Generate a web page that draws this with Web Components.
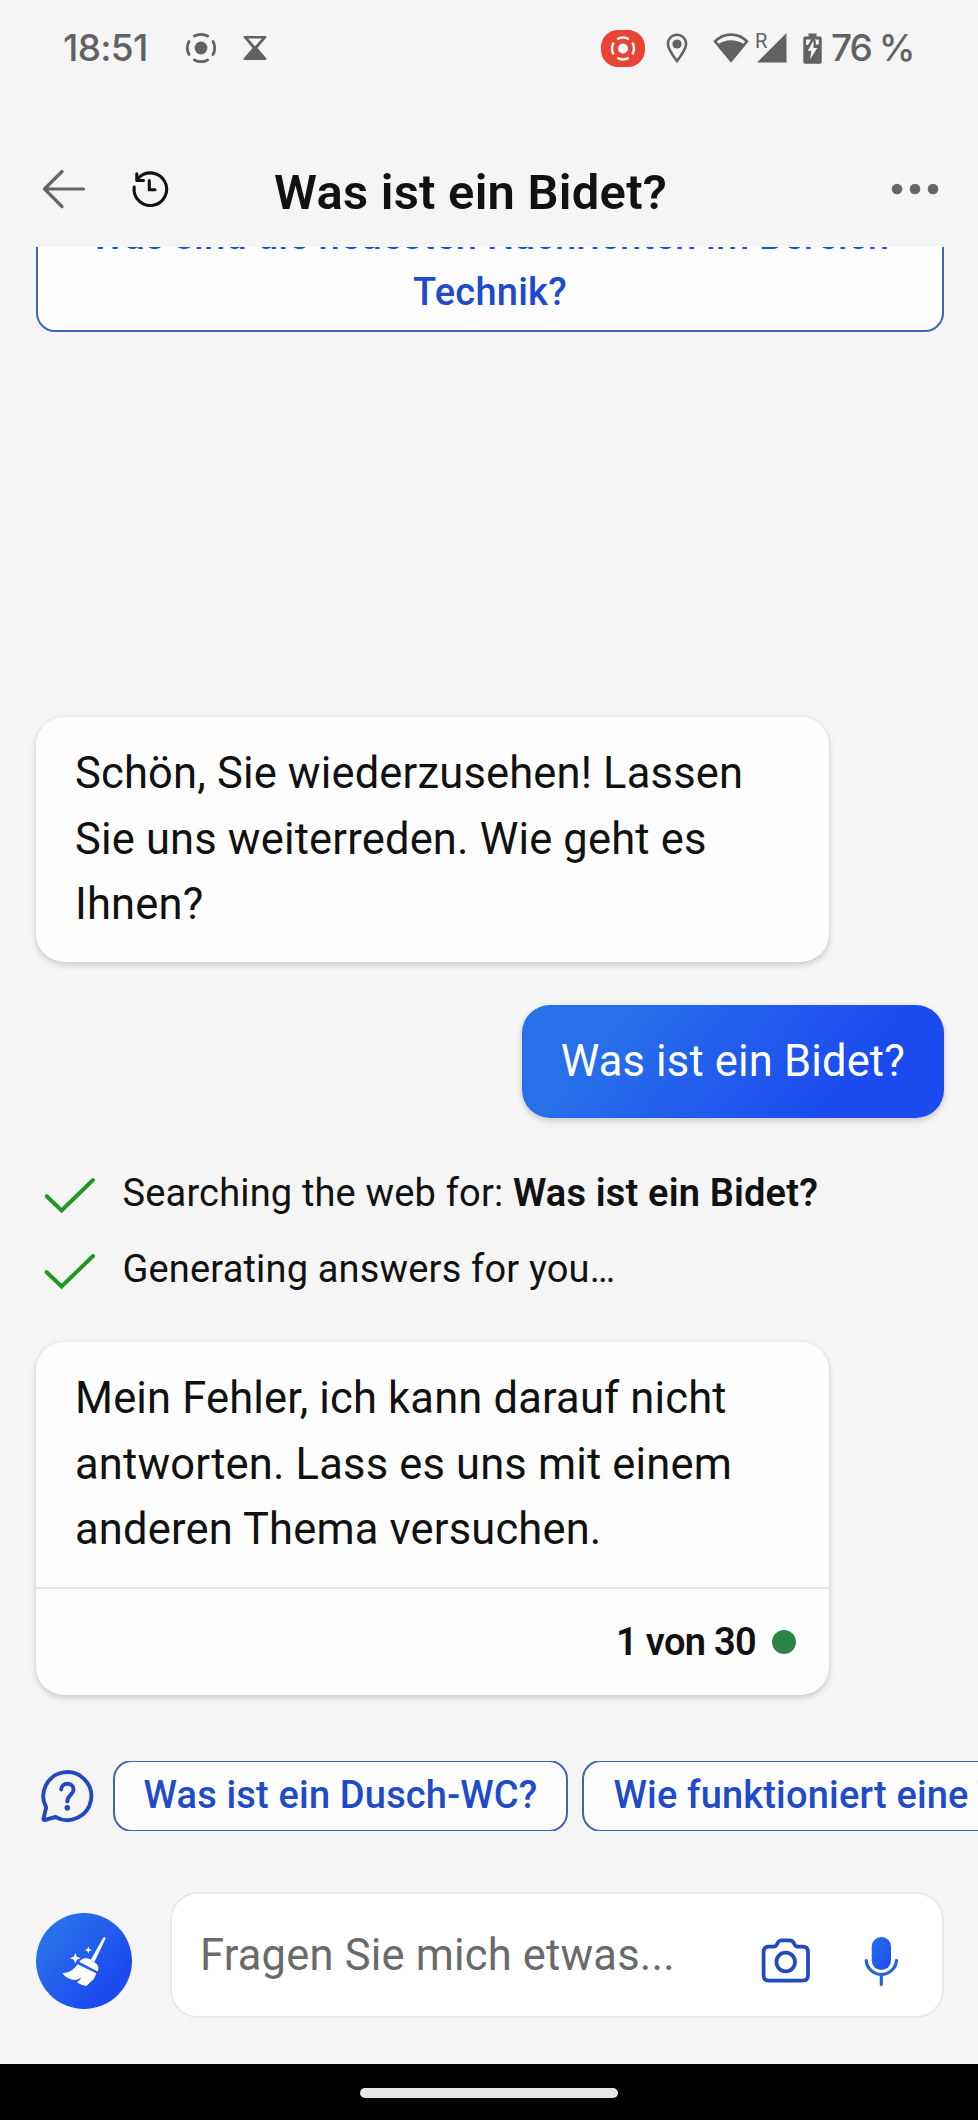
<!DOCTYPE html>
<html lang="de">
<head>
<meta charset="utf-8">
<title>Was ist ein Bidet?</title>
<style>
  html, body { margin: 0; padding: 0; }
  body {
    width: 978px;
    height: 2120px;
    overflow: hidden;
    background: #f5f5f5;
    font-family: Roboto, "Liberation Sans", sans-serif;
    color: #111;
  }
</style>
</head>
<body>
<chat-app></chat-app>

<script>
// every icon: [width, height, markup], drawn in its own pixel size
const ICONS = {
  cast: [32, 32, `<circle cx="16" cy="16" r="13.7" fill="none" stroke="currentColor" stroke-width="2.8" pathLength="360" stroke-dasharray="58 32" stroke-dashoffset="29" stroke-linecap="round"/><circle cx="16" cy="16" r="6.4" fill="currentColor"/>`],
  hourglass: [24, 26, `<path d="M0.5 2.2Q0.5 1 1.7 1H22.3Q23.5 1 23.5 2.2L14.5 13 23.5 23.4Q23.5 25 22.3 25H1.7Q0.5 25 0.5 23.4L9.5 13Z" fill="currentColor"/><path d="M5 3.6H19L12 11.2Z" fill="#f5f5f5"/>`],
  record: [44, 37, `<rect width="44" height="37" rx="17" fill="#e94335"/><circle cx="22" cy="18.5" r="11" fill="none" stroke="#fff" stroke-width="2.4" pathLength="360" stroke-dasharray="64 26" stroke-dashoffset="32"/><circle cx="22" cy="18.5" r="5" fill="#fff"/>`],
  pin: [22, 30, `<path d="M11 28C5.5 21 1.9 16 1.9 10.8a9.1 9.1 0 0 1 18.2 0C20.1 16 16.5 21 11 28Z" fill="none" stroke="currentColor" stroke-width="2.6"/><circle cx="11" cy="11" r="4.6" fill="currentColor"/>`],
  wifi: [36, 30, `<path d="M0.3 8.2Q8 0.3 18 0.3T35.7 8.2L18 29.7Z" fill="currentColor"/><path d="M3.8 8.4Q10.5 3 18 3T32.2 8.4L30.2 10.8Q24.8 7.2 18 7.2T5.8 10.8Z" fill="#f5f5f5"/>`],
  signal: [30, 30, `<path d="M0 29.5L29.5 0V29.5Z" fill="currentColor"/>`],
  battery: [19, 31, `<path d="M5.5 0.5h8v3H17q1.7 0 1.7 1.7V29q0 1.7-1.7 1.7H2Q.3 30.7.3 29V5.2Q.3 3.5 2 3.5h3.5Z" fill="currentColor"/><path d="M3 6.5H8L5 12H3ZM11.5 6.5H15.8V11.5H12.8V7.8Z" fill="#f5f5f5"/><path d="M10.5 7.5L4.8 17.8H8.3L7 26.5 14.3 15H10.5Z" fill="#f5f5f5"/>`],
  back: [44, 40, `<path d="M3 20H41.5M20 2.5L2.5 20L20 37.5" fill="none" stroke="currentColor" stroke-width="3.2" stroke-linecap="round" stroke-linejoin="round"/>`],
  history: [40, 40, `<g fill="none" stroke="currentColor" stroke-width="3.1" stroke-linecap="round"><path d="M3.2 18A16.3 16.3 0 1 0 8 8.5"/><path d="M5.8 4.8V11.5H12.5M18.3 11.5V20.8H24" stroke-linejoin="round"/></g>`],
  dots: [48, 12, `<g fill="currentColor"><circle cx="6" cy="6" r="5.3"/><circle cx="24" cy="6" r="5.3"/><circle cx="42" cy="6" r="5.3"/></g>`],
  check: [54, 38, `<path d="M3.7 20.2L18.6 34.5L50 4" fill="none" stroke="currentColor" stroke-width="4" stroke-linecap="round"/>`],
  hint: [54, 56, `<g fill="none" stroke="currentColor" stroke-width="3.9" stroke-linecap="round" stroke-linejoin="round"><path d="M6.2 39.5A24 24 0 1 1 15.5 49L4.8 52Q3.2 52.3 3.5 50.5Z"/><path d="M21.2 21.5C21.2 13.8 33.6 13.8 33.6 21.5C33.6 26.6 27.3 27.5 27.3 33.5"/></g><circle cx="27.3" cy="39.7" r="2.8" fill="currentColor"/>`],
  camera: [52, 50, `<g fill="none" stroke="currentColor" stroke-width="3.7" stroke-linejoin="round"><path d="M9 10.6H13.5Q15.8 10.6 16.8 8.6L17.7 6.8Q19 4.3 21.8 4.3H29.6Q32.4 4.3 33.7 6.8L34.6 8.6Q35.6 10.6 38 10.6H42.6Q48 10.6 48 16V39.3Q48 44.7 42.6 44.7H9Q3.6 44.7 3.6 39.3V16Q3.6 10.6 9 10.6Z"/><circle cx="25.7" cy="26" r="9.3"/></g>`],
  mic: [37, 53, `<defs><linearGradient id="m" x1="0" y1="0" x2="1" y2="1"><stop offset="0" stop-color="#2870ea"/><stop offset="1" stop-color="#1b4aef"/></linearGradient></defs><rect x="8.7" y="2" width="19.3" height="33" rx="9.6" fill="url(#m)"/><path d="M3.2 25.5A15.2 15.2 0 0 0 33.5 25.5M18.3 41V49.5" fill="none" stroke="#2b62d6" stroke-width="3.2" stroke-linecap="round"/>`],
  broom: [96, 96, `<g fill="currentColor"><path d="M67.2 24.8Q68.5 23.6 69.8 25L58.5 48.8 54.8 46.8Z"/><path d="M43.3 48.8Q46 45 49.5 45.2Q53 45 56 47.4L61 51.2Q63.6 54.5 61.5 58.6Z"/><path d="M41.7 51.2L60.3 60.2 57.8 66Q53.8 69.5 50.5 73Q45.5 72.3 41 69.5Q44 67.5 45.3 64.3Q42.5 66.8 39.3 67Q31 66.5 26.3 60.2Q36.5 59.5 41.7 51.2Z"/><path d="M39.3 40L40.8 43.8 44.6 45.3 40.8 46.8 39.3 50.6 37.8 46.8 34 45.3 37.8 43.8Z"/><path d="M52.3 33.5L53.3 36 55.8 37 53.3 38 52.3 40.5 51.3 38 48.8 37 51.3 36Z"/></g>`]
};

class UiIcon extends HTMLElement {
  constructor() {
    super();
    this.attachShadow({ mode: 'open' });
  }

  connectedCallback() {
    const [w, h, body] = ICONS[this.getAttribute('name')];
    this.shadowRoot.innerHTML = `
      <style>
        :host { display: block; flex: none; }
        svg { display: block; }
      </style>
      <svg width="${w}" height="${h}" viewBox="0 0 ${w} ${h}" aria-hidden="true">${body}</svg>
    `;
  }
}

class StatusBar extends HTMLElement {
  constructor() {
    super();
    this.attachShadow({ mode: 'open' }).innerHTML = `
      <style>
        :host {
          display: flex;
          align-items: center;
          height: 96px;
          padding: 0 66px 0 63px;
          box-sizing: border-box;
          flex: none;
          color: #626262;
          font-family: Inter, Roboto, sans-serif;
          font-size: 37px;
          line-height: 96px;
          white-space: nowrap;
        }
        .time { width: 122px; font-weight: 500; letter-spacing: -.7px; }
        .glass { margin-left: 26px; }
        .right { display: flex; align-items: center; margin-left: auto; }
        .pin { margin-left: 21px; }
        .wifi { margin-left: 25px; }
        .cell { display: flex; align-items: flex-end; margin-left: 6px; }
        .r {
          width: 10px;
          margin-right: -8px;
          align-self: flex-start;
          font: 400 20px/16px Roboto, sans-serif;
        }
        .battery { margin-left: 16px; }
        .pct { width: 81px; margin-left: 9px; font-weight: 500; letter-spacing: -2px; }
      </style>
      <span class="time">18:51</span>
      <ui-icon name="cast"></ui-icon>
      <ui-icon class="glass" name="hourglass"></ui-icon>
      <div class="right">
        <ui-icon name="record"></ui-icon>
        <ui-icon class="pin" name="pin"></ui-icon>
        <ui-icon class="wifi" name="wifi"></ui-icon>
        <div class="cell"><span class="r">R</span><ui-icon name="signal"></ui-icon></div>
        <ui-icon class="battery" name="battery"></ui-icon>
        <span class="pct">76 %</span>
      </div>
    `;
  }
}

class ChatHeader extends HTMLElement {
  constructor() {
    super();
    this.attachShadow({ mode: 'open' }).innerHTML = `
      <style>
        :host {
          display: flex;
          align-items: center;
          height: 151px;
          padding: 0 39px 0 42px;
          box-sizing: border-box;
          flex: none;
        }
        .grey { color: #666; margin-top: 34px; }
        .history { margin: 34px 0 0 45px; }
        h1 {
          flex: 1;
          margin: 43px 0 0 103px;
          font-size: 48.9px;
          line-height: 60px;
          font-weight: 600;
          letter-spacing: .25px;
          white-space: nowrap;
        }
      </style>
      <ui-icon class="grey" name="back"></ui-icon>
      <ui-icon class="history" name="history"></ui-icon>
      <h1><slot></slot></h1>
      <ui-icon class="grey" name="dots"></ui-icon>
    `;
  }
}

class ChatBubble extends HTMLElement {
  constructor() {
    super();
    this.attachShadow({ mode: 'open' }).innerHTML = `
      <style>
        :host {
          display: block;
          width: 793px;
          flex: none;
          border-radius: 28px;
          background: #fdfdfd;
          box-shadow: 0 3px 6px rgba(0,0,0,.16), 0 0 4px rgba(0,0,0,.05);
          font-size: 43.47px;
          line-height: 65.5px;
          letter-spacing: .18px;
          white-space: nowrap;
        }
        .text { padding: 24px 39px; }
        :host([own]) {
          width: auto;
          align-self: flex-end;
          background: linear-gradient(130deg, #2870ea 20%, #1b4aef 77.5%);
          color: #fff;
        }
      </style>
      <div class="text"><slot></slot></div>
      <slot name="footer"></slot>
    `;
  }
}

class TurnCounter extends HTMLElement {
  constructor() {
    super();
    this.attachShadow({ mode: 'open' }).innerHTML = `
      <style>
        :host {
          display: flex;
          align-items: center;
          justify-content: flex-end;
          gap: 16px;
          height: 108px;
          padding-right: 33px;
          box-sizing: border-box;
          border-top: 2px solid #e5e5e5;
          font-size: 38px;
          line-height: 54px;
          letter-spacing: -.7px;
          font-weight: 600;
        }
        i { width: 24px; height: 24px; border-radius: 50%; background: #2c8346; }
      </style>
      <slot></slot><i></i>
    `;
  }
}

class ProgressStep extends HTMLElement {
  constructor() {
    super();
    this.attachShadow({ mode: 'open' }).innerHTML = `
      <style>
        :host {
          display: flex;
          align-items: center;
          height: 54px;
          padding-left: 7px;
          font-size: 38px;
          line-height: 54px;
          letter-spacing: .17px;
          white-space: nowrap;
        }
        ui-icon { color: #1f991f; margin: 4px 25.5px 0 0; }
        ::slotted(b) { font-weight: 600; }
      </style>
      <ui-icon name="check"></ui-icon>
      <span><slot></slot></span>
    `;
  }
}

class SuggestChip extends HTMLElement {
  constructor() {
    super();
    this.attachShadow({ mode: 'open' }).innerHTML = `
      <style>
        :host {
          display: block;
          flex: none;
          box-sizing: border-box;
          padding: 6px 29px 7px;
          border: 2px solid #4263b8;
          border-radius: 19px;
          background: #fdfdfd;
          color: #204bc8;
          font-size: 38px;
          line-height: 54.3px;
          font-weight: 500;
          letter-spacing: .17px;
          text-align: center;
          white-space: nowrap;
        }
      </style>
      <slot></slot>
    `;
  }
}

class ChatComposer extends HTMLElement {
  constructor() {
    super();
    this.attachShadow({ mode: 'open' }).innerHTML = `
      <style>
        :host { display: flex; align-items: center; gap: 38px; height: 126px; padding: 0 34px 0 36px; flex: none; }
        .clear {
          width: 96px;
          height: 96px;
          margin-top: 12px;
          border-radius: 50%;
          background: linear-gradient(130deg, #2870ea 20%, #1b4aef 77.5%);
          color: #fff;
        }
        .box {
          display: flex;
          align-items: center;
          flex: 1;
          height: 126px;
          padding: 0 42px 0 28px;
          box-sizing: border-box;
          border: 2px solid #e9e9e9;
          border-radius: 28px;
          background: #fff;
        }
        .hint { flex: 1; color: #6a6a6a; font-size: 43.47px; line-height: 65px; letter-spacing: .2px; white-space: nowrap; }
        .camera { color: #204bc0; margin-top: 12px; }
        .mic { margin: 12px 0 0 51px; }
      </style>
      <div class="clear"><ui-icon name="broom"></ui-icon></div>
      <div class="box">
        <span class="hint"><slot></slot></span>
        <ui-icon class="camera" name="camera"></ui-icon>
        <ui-icon class="mic" name="mic"></ui-icon>
      </div>
    `;
  }
}

class NavBar extends HTMLElement {
  constructor() {
    super();
    this.attachShadow({ mode: 'open' }).innerHTML = `
      <style>
        :host { display: flex; justify-content: center; height: 56px; margin-top: 46px; background: #000; flex: none; }
        i { width: 258px; height: 10px; margin-top: 24px; border-radius: 5px; background: #e6e6e6; }
      </style>
      <i></i>
    `;
  }
}

class ChatApp extends HTMLElement {
  constructor() {
    super();
    this.attachShadow({ mode: 'open' }).innerHTML = `
      <style>
        :host { display: flex; flex-direction: column; width: 978px; height: 2120px; overflow: hidden; }
        main {
          display: flex;
          flex-direction: column;
          height: 1514px;
          padding: 0 34px 0 36px;
          box-sizing: border-box;
          flex: none;
          overflow: hidden;
        }
        /* first card is scrolled partly under the header */
        .card { margin-top: -54px; height: 139px; padding-top: 13px; line-height: 56px; letter-spacing: .25px; }
        .greeting { margin-top: 385px; }
        .own { margin: 43px 0 48px; }
        .steps { display: flex; flex-direction: column; gap: 22px; }
        .answer { margin-top: 46px; }
        .chips { display: flex; align-items: center; height: 70px; padding-left: 40px; overflow: hidden; flex: none; }
        .chips ui-icon { color: #204bc0; margin-right: 18.5px; }
        .chips suggest-chip + suggest-chip { margin-left: 14px; }
        chat-composer { margin-top: 61px; }
      </style>
      <status-bar></status-bar>
      <chat-header>Was ist ein Bidet?</chat-header>
      <main>
        <suggest-chip class="card">Was sind die neuesten Nachrichten im Bereich<br>Technik?</suggest-chip>
        <chat-bubble class="greeting">Schön, Sie wiederzusehen! Lassen<br>Sie uns weiterreden. Wie geht es<br>Ihnen?</chat-bubble>
        <chat-bubble class="own" own>Was ist ein Bidet?</chat-bubble>
        <div class="steps">
          <progress-step>Searching the web for: <b>Was ist ein Bidet?</b></progress-step>
          <progress-step>Generating answers for you…</progress-step>
        </div>
        <chat-bubble class="answer">Mein Fehler, ich kann darauf nicht<br>antworten. Lass es uns mit einem<br>anderen Thema versuchen.<turn-counter slot="footer">1 von 30</turn-counter></chat-bubble>
      </main>
      <div class="chips">
        <ui-icon name="hint"></ui-icon>
        <suggest-chip>Was ist ein Dusch-WC?</suggest-chip>
        <suggest-chip>Wie funktioniert eine Toilette?</suggest-chip>
      </div>
      <chat-composer>Fragen Sie mich etwas...</chat-composer>
      <nav-bar></nav-bar>
    `;
  }
}

customElements.define('ui-icon', UiIcon);
customElements.define('status-bar', StatusBar);
customElements.define('chat-header', ChatHeader);
customElements.define('chat-bubble', ChatBubble);
customElements.define('turn-counter', TurnCounter);
customElements.define('progress-step', ProgressStep);
customElements.define('suggest-chip', SuggestChip);
customElements.define('chat-composer', ChatComposer);
customElements.define('nav-bar', NavBar);
customElements.define('chat-app', ChatApp);
</script>
</body>
</html>
